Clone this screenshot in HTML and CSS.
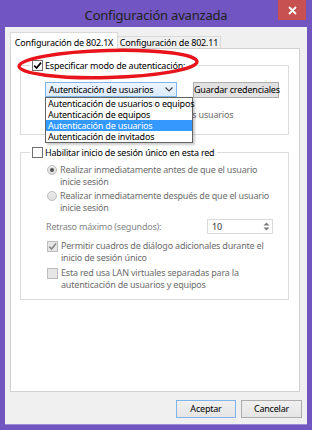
FILE: index.html
```html
<!DOCTYPE html>
<html lang="es">
<head>
<meta charset="utf-8">
<title>Configuración avanzada</title>
<link rel="stylesheet" href="styles.css">
</head>
<body>
<div class="window">
  <div class="titlebar">
    <span></span>
    <div class="title">Configuración avanzada</div>
    <div class="close">
      <svg width="9" height="9" viewBox="0 0 9 9"><path d="M1 1 L8 8 M8 1 L1 8" stroke="#fff" stroke-width="1.8" fill="none"/></svg>
    </div>
  </div>
  <div class="client">
    <div class="tabs">
      <div class="tab active">Configuración de 802.1X</div>
      <div class="tab inactive">Configuración de 802.11</div>
    </div>
    <div class="panel">
      <fieldset class="group g1">
        <legend class="legend"><span class="cb on"><svg width="9" height="9" viewBox="0 0 9 9"><path d="M1.2 4.6 L3.6 7 L8 1.6" stroke="#000" stroke-width="1.7" fill="none"/></svg></span><span class="ltext">Especificar modo de autenticación:</span></legend>
        <div class="body">
          <div class="combo-row">
            <div class="combo">
              <span class="combo-text">Autenticación de usuarios</span>
              <svg class="chev" width="8" height="5" viewBox="0 0 8 5"><path d="M0.5 0.5 L4 4 L7.5 0.5" stroke="#444" stroke-width="1.2" fill="none"/></svg>
              <ul class="dropdown">
                <li>Autenticación de usuarios o equipos</li>
                <li>Autenticación de equipos</li>
                <li class="sel">Autenticación de usuarios</li>
                <li>Autenticación de invitados</li>
              </ul>
            </div>
            <button class="btn save">Guardar credenciales</button>
          </div>
          <div class="opt dis"><span class="cb off"></span><span>Eliminar credenciales de todos los usuarios</span></div>
        </div>
      </fieldset>

      <fieldset class="group g2">
        <legend class="legend"><span class="cb"></span><span class="ltext">Habilitar inicio de sesión único en esta red</span></legend>
        <div class="body">
          <div class="ropt"><span class="radio on"></span><span>Realizar inmediatamente antes de que el usuario<br>inicie sesión</span></div>
          <div class="ropt r2"><span class="radio"></span><span>Realizar inmediatamente después de que el usuario<br>inicie sesión</span></div>
          <div class="delay">
            <span class="dlabel">Retraso máximo (segundos):</span>
            <div class="spin">
              <span class="spin-val">10</span>
              <span class="spin-btns">
                <svg width="7" height="4" viewBox="0 0 7 4"><path d="M0.5 3.5 L3.5 0.5 L6.5 3.5 Z" fill="#7a7a7a"/></svg>
                <svg width="7" height="4" viewBox="0 0 7 4"><path d="M0.5 0.5 L3.5 3.5 L6.5 0.5 Z" fill="#7a7a7a"/></svg>
              </span>
            </div>
          </div>
          <div class="copt c1"><span class="cb off"><svg width="9" height="9" viewBox="0 0 9 9"><path d="M1.2 4.6 L3.6 7 L8 1.6" stroke="#8a8a8a" stroke-width="1.6" fill="none"/></svg></span><span>Permitir cuadros de diálogo adicionales durante el<br>inicio de sesión único</span></div>
          <div class="copt c2"><span class="cb off"></span><span>Esta red usa LAN virtuales separadas para la<br>autenticación de usuarios y equipos</span></div>
        </div>
      </fieldset>

      <svg class="mark" width="290" height="40" viewBox="0 0 290 40">
        <ellipse cx="98" cy="16" rx="89" ry="13.5" transform="rotate(-1.5 98 16)" fill="none" stroke="#e8131b" stroke-width="3.4"/>
      </svg>
    </div>
    <div class="actions">
      <button class="btn ok">Aceptar</button>
      <button class="btn cancel">Cancelar</button>
    </div>
  </div>
</div>
</body>
</html>
```
FILE: styles.css
```css
* { box-sizing: border-box; }
html, body { margin: 0; padding: 0; }
body {
  width: 312px;
  height: 430px;
  overflow: hidden;
  background: #7155c0;
  font-family: "Noto Sans", "Open Sans", sans-serif;
  font-size: 9px;
  letter-spacing: -0.2px;
  color: #000;
}
.window {
  width: 312px;
  height: 430px;
  display: flex;
  flex-direction: column;
}
.titlebar {
  height: 27px;
  flex: none;
  display: grid;
  grid-template-columns: 1fr auto 1fr;
  align-items: start;
}
.title {
  font-size: 13px;
  letter-spacing: -0.2px;
  color: #222;
  line-height: 18px;
  padding-top: 6px;
}
.close {
  justify-self: end;
  margin-right: 6px;
  width: 28px;
  height: 20px;
  background: #c75050;
  display: flex;
  align-items: center;
  justify-content: center;
}
.close svg { display: block; }
.client {
  flex: 1;
  margin: 0 5px 6px;
  background: #f0f0f0;
  padding: 5px 5px 6px;
  display: flex;
  flex-direction: column;
  box-shadow: 0 1px 0 #9d8ad8;
}
.tabs {
  display: flex;
  align-items: flex-end;
  height: 16px;
  flex: none;
}
.tab {
  border: 1px solid #d9d9d9;
  border-bottom: none;
  text-align: center;
  white-space: nowrap;
}
.tab.active {
  width: 108px;
  height: 17px;
  margin-bottom: -1px;
  background: #fff;
  padding-top: 3px;
  line-height: 13px;
  position: relative;
  z-index: 1;
}
.tab.inactive {
  width: 103px;
  height: 12px;
  line-height: 11px;
  border-left: none;
  background: #f0f0f0;
}
.panel {
  height: 344px;
  flex: none;
  margin-right: 2px;
  background: #fff;
  border: 1px solid #d0d0d0;
  padding: 10px 10px 0 9px;
  position: relative;
}
.group {
  border: 1px solid #dcdcdc;
  margin: 0;
  padding: 0;
  min-width: 0;
}
.legend {
  margin-left: 9px;
  padding: 0 3px 0 2px;
  line-height: 13px;
  height: 13px;
  white-space: nowrap;
}
.legend .cb { vertical-align: top; margin-top: 1px; }
.ltext { margin-left: 2px; }
.cb {
  display: inline-block;
  width: 11px;
  height: 11px;
  border: 1px solid #707070;
  background: #fff;
  flex: none;
  position: relative;
}
.cb svg { display: block; margin: 0; }
.cb.off {
  border-color: #bcbcbc;
  background: #e6e6e6;
}
.g1 .body { padding: 10px 0 13px 24px; }
.combo-row {
  display: flex;
  align-items: flex-start;
  height: 16px;
}
.combo {
  width: 132px;
  height: 15px;
  border: 1px solid #7eb4ea;
  background: linear-gradient(#edf5fd, #dbeafb);
  padding-left: 3px;
  display: flex;
  align-items: center;
  line-height: 13px;
  position: relative;
}
.combo-text { flex: 1; white-space: nowrap; }
.chev { margin-right: 3px; display: block; }
.dropdown {
  position: absolute;
  left: -1px;
  top: 14px;
  width: 148px;
  margin: 0;
  padding: 0;
  list-style: none;
  background: #fff;
  border: 1px solid #646464;
  box-shadow: 2px 2px 2px rgba(0,0,0,0.2);
  z-index: 5;
}
.dropdown li {
  height: 11px;
  line-height: 11px;
  padding-left: 2px;
  white-space: nowrap;
}
.dropdown li.sel {
  background: #3399ff;
  color: #fff;
}
.btn {
  font: inherit;
  letter-spacing: inherit;
  color: #000;
  padding: 0;
  margin: 0;
  border: 1px solid #acacac;
  background: linear-gradient(#f0f0f0, #e5e5e5);
  white-space: nowrap;
}
.btn.save {
  width: 86px;
  height: 16px;
  margin-left: 16px;
  background: #e1e1e1;
  border-color: #adadad;
  line-height: 14px;
}
.opt {
  margin-top: 11px;
  padding-left: 2px;
  display: flex;
  align-items: center;
  gap: 2px;
  line-height: 12px;
  white-space: nowrap;
}
.dis, .ropt, .copt { color: #6d6d6d; }
.g2 { margin-top: 11px; }
.g2 .body { padding: 5px 15px 9px 26px; }
.ropt, .copt {
  display: flex;
  align-items: flex-start;
  gap: 3px;
  line-height: 11.5px;
  white-space: nowrap;
}
.radio {
  width: 10px;
  height: 10px;
  margin-top: 1px;
  border: 1px solid #bcbcbc;
  border-radius: 50%;
  background: linear-gradient(#ebebeb, #dedede);
  flex: none;
  display: flex;
  align-items: center;
  justify-content: center;
}
.radio.on::after {
  content: "";
  width: 4px;
  height: 4px;
  border-radius: 50%;
  background: #555;
}
.r2 { margin-top: 3px; }
.delay {
  margin-top: 6px;
  height: 15px;
  display: flex;
  align-items: center;
}
.dlabel { margin-left: -1px; color: #858585; white-space: nowrap; }
.spin {
  margin-left: auto;
  width: 66px;
  height: 15px;
  border: 1px solid #d9d9d9;
  background: #fff;
  display: flex;
  align-items: center;
  padding-left: 4px;
}
.spin-val { flex: 1; color: #333; }
.spin-btns {
  width: 12px;
  height: 13px;
  display: flex;
  flex-direction: column;
  align-items: center;
  justify-content: space-around;
  padding: 1px 0;
}
.spin-btns svg { display: block; }
.copt .cb { margin-top: 1px; }
.c1 { margin-top: 6px; }
.c2 { margin-top: 4px; }
.mark {
  position: absolute;
  left: -1px;
  top: -1px;
  z-index: 6;
  pointer-events: none;
}
.actions {
  display: flex;
  justify-content: flex-end;
  gap: 5px;
  margin-top: 8px;
  flex: none;
}
.btn.ok, .btn.cancel {
  height: 18px;
  line-height: 16px;
}
.btn.ok { width: 60px; border-color: #7eb4ea; }
.btn.cancel { width: 61px; }
```
